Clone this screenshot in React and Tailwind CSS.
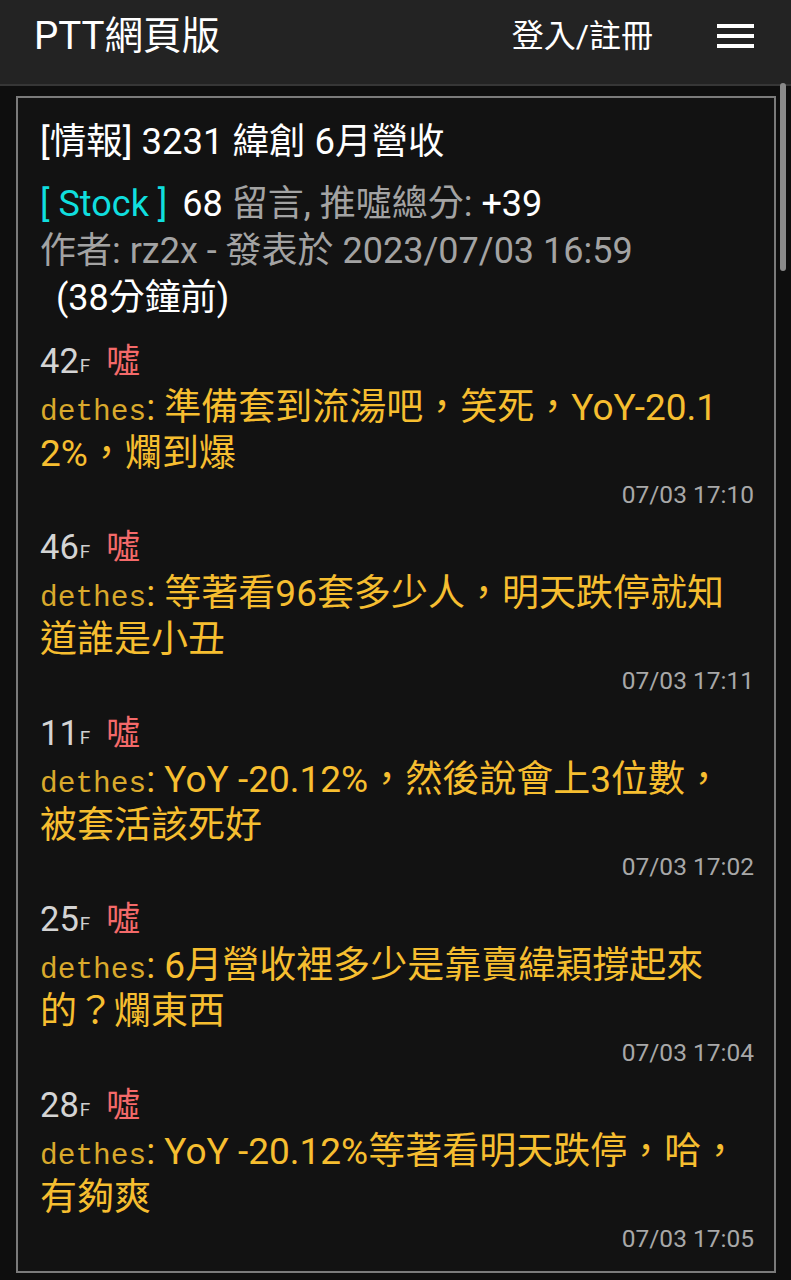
import React from "react";

const comments = [
  { floor: "42", text: "準備套到流湯吧，笑死，YoY-20.12%，爛到爆", time: "07/03 17:10" },
  { floor: "46", text: "等著看96套多少人，明天跌停就知道誰是小丑", time: "07/03 17:11" },
  { floor: "11", text: "YoY -20.12%，然後說會上3位數，被套活該死好", time: "07/03 17:02" },
  { floor: "25", text: "6月營收裡多少是靠賣緯穎撐起來的？爛東西", time: "07/03 17:04" },
  { floor: "28", text: "YoY -20.12%等著看明天跌停，哈，有夠爽", time: "07/03 17:05" },
];

const sans = "font-['Roboto','Noto_Sans_CJK_TC',sans-serif]";

function Comment({ c }) {
  return (
    <div className="mb-[10px]">
      <div className="flex h-[48px] items-center">
        <span className="text-[34.5px] leading-none text-[#d4d4d4]">{c.floor}</span>
        <span className="ml-[1px] mr-[16px] mt-[8px] text-[19px] leading-none text-[#cfcfcf]">F</span>
        <span className="text-[34px] leading-none text-[#f46a6a]">噓</span>
      </div>
      <div className="break-all text-[37px] leading-[46px] text-[#f6be30]">
        <span className="font-['Liberation_Mono',monospace] text-[29.5px] leading-none text-[#d9a92c]">dethes</span>
        : {c.text}
      </div>
      <div className="flex h-[36px] items-center justify-end text-[24.5px] leading-none text-[#a8a8a8]">
        {c.time}
      </div>
    </div>
  );
}

export default function App() {
  return (
    <div className={`relative min-h-screen bg-[#0e0e0e] ${sans}`}>
      <header className="h-[86px] border-b-2 border-[#363636] bg-[#232323] pl-[34px] pr-[37px]">
        <div className="flex h-[72px] items-center">
          <div className="text-[38.5px] leading-none text-white">PTT網頁版</div>
          <div className="ml-auto text-[32px] leading-none text-white">登入/註冊</div>
          <div className="ml-[64px] flex w-[37px] flex-col gap-[6px]">
            <span className="block h-[4px] bg-white" />
            <span className="block h-[4px] bg-white" />
            <span className="block h-[4px] bg-white" />
          </div>
        </div>
      </header>

      <div className="absolute right-[5px] top-[83px] h-[188px] w-[6px] rounded-full bg-[#8a8a8a]" />

      <main className="px-[16px] pt-[10px] pb-[8px] pr-[15px]">
        <div className="border-2 border-[#7a7a7a] bg-[#121212] pl-[22px] pr-[20px] pt-[21px] pb-[4px]">
          <h1 className="text-[36.5px] leading-[46px] text-white">[情報] 3231 緯創 6月營收</h1>
          <div className="mt-[16px] text-[36px] leading-[47px] text-[#a3a3a3]">
            <div>
              <span className="text-[#10dede]">[ Stock ]</span>{" "}
              <span className="ml-[6px] text-white">68</span> 留言, 推噓總分:{" "}
              <span className="text-white">+39</span>
            </div>
            <div>作者: rz2x - 發表於 2023/07/03 16:59</div>
            <div className="pl-[16px] text-white">(38分鐘前)</div>
          </div>
          <div className="mt-[15px]">
            {comments.map((c) => (
              <Comment key={c.floor} c={c} />
            ))}
          </div>
        </div>
      </main>
    </div>
  );
}
